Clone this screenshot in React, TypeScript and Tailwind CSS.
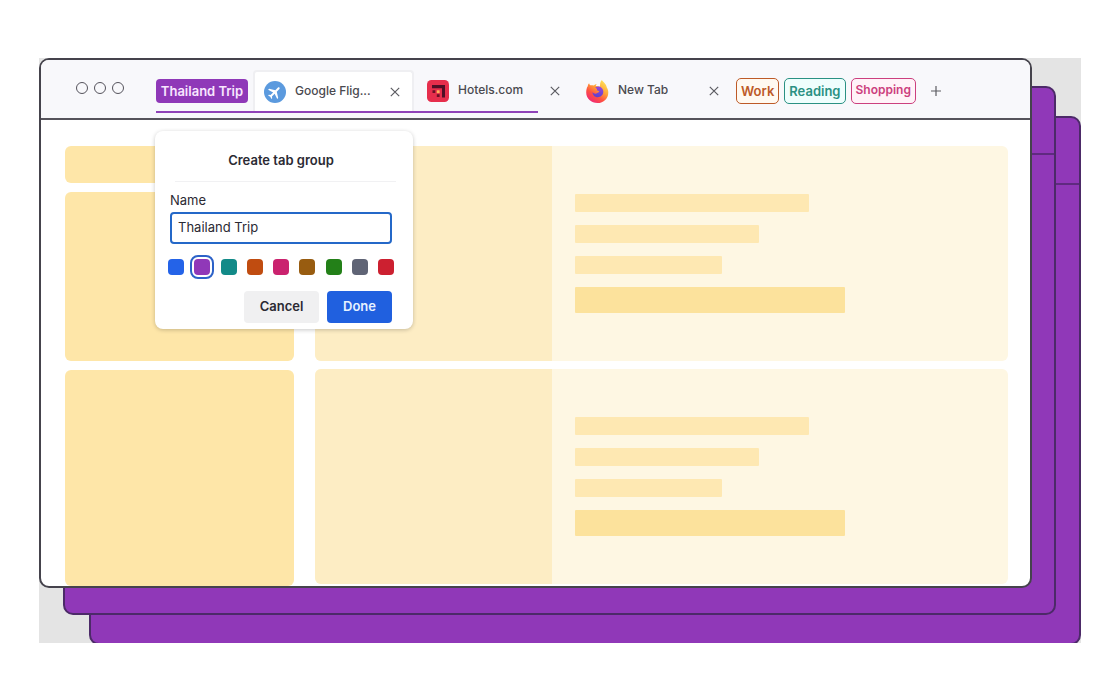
import { useState } from "react";

function CloseIcon() {
  return (
    <svg viewBox="0 0 10 10" className="size-[10px]" fill="none" stroke="#5c5c62" strokeWidth="1.2">
      <path d="M0.8 0.8 9.2 9.2M9.2 0.8 0.8 9.2" />
    </svg>
  );
}

function CloseButton({ label }: { label: string }) {
  return (
    <button type="button" aria-label={label} className="flex size-4 shrink-0 items-center justify-center">
      <CloseIcon />
    </button>
  );
}

function FlightsIcon() {
  return (
    <svg viewBox="0 0 22 22" className="size-[22px] shrink-0">
      <circle cx="11" cy="11" r="11" fill="#5b9ade" />
      <g transform="translate(10.6 11.4) rotate(45) scale(0.68) translate(-11.5 -12)">
        <path
          fill="#fff"
          d="M21 16v-2l-8-5V3.5c0-.83-.67-1.5-1.5-1.5S10 2.67 10 3.5V9l-8 5v2l8-2.5V19l-2 1.5V22l3.5-1 3.5 1v-1.5L13 19v-5.5l8 2.5z"
        />
      </g>
    </svg>
  );
}

function HotelsIcon() {
  return (
    <svg viewBox="0 0 22 22" className="size-[22px] shrink-0">
      <rect width="22" height="22" rx="4.5" fill="#e62e4c" />
      <path d="M5 5h13v12.500h-3V8.200H5z" fill="#4f0f26" />
      <path d="M5.500 10.300h2.800v2.800H5.500zM9.800 14.300h2.800v2.800H9.800z" fill="#6a1026" />
      <rect x="9.800" y="10.300" width="2.800" height="2.800" fill="#ffb25a" />
    </svg>
  );
}

function FirefoxIcon() {
  return (
    <svg viewBox="0 0 24 24" className="size-6 shrink-0">
      <defs>
        <linearGradient id="flame" x1="0.85" y1="0.05" x2="0.25" y2="0.95">
          <stop offset="0" stopColor="#ffe45a" />
          <stop offset="0.4" stopColor="#ffa436" />
          <stop offset="0.7" stopColor="#ff5240" />
          <stop offset="1" stopColor="#f02a74" />
        </linearGradient>
        <linearGradient id="globe" x1="0.6" y1="0" x2="0.4" y2="1">
          <stop offset="0" stopColor="#9a48d8" />
          <stop offset="1" stopColor="#5c40cc" />
        </linearGradient>
      </defs>
      <path
        fill="url(#flame)"
        d="M16.800 1c1.200 1.800 2.900 2.800 4 4.700.5.900.8 1.700.9 2.500 1 1.500 1.600 3.300 1.600 5.200C23.300 19.300 18.700 24 12.500 24S1.200 19.400 1.200 13.500c0-2.300.4-4.500 1.500-6.200.1-1.300.6-2.300 1.400-3 .2.900.6 1.500 1.200 2 1.300-.3 2.400-.2 3.500.2.800-.9 1.900-1.500 3-1.600-.7.700-1 1.500-1 2.200 1.700.1 3.100.3 4.200 1 .1-2.500-.3-5 1.800-7.100z"
      />
      <path fill="url(#globe)" d="M10.300 8.300c3.700-1.900 8 .3 8 4.500 0 3.100-2.400 5.400-5.500 5.400-3 0-5.300-2.200-5.300-5 1 1.200 2.400 1.800 3.900 1.300 1.200-.4 1.700-1.400 2.900-1.500-.4-1.200-1.500-1.700-2.700-1.400.8-1 .6-1.800-.2-2.200-.5-.2-.8-.5-1.100-1.100z" />
    </svg>
  );
}

function TabTitle({ children }: { children: string }) {
  return (
    <button type="button" className="truncate pb-[2px] text-left text-[12px] leading-4 font-medium text-[#4a494f]">
      {children}
    </button>
  );
}

function TabBar() {
  return (
    <header className="flex h-[60px] items-end border-b-2 border-[#55535b] bg-[#f8f8fb] pb-[5px] pl-[35px]">
      <div className="mb-[19px] flex gap-[6px]">
        <span className="size-3 rounded-full border border-[#55535c]" />
        <span className="size-3 rounded-full border border-[#55535c]" />
        <span className="size-3 rounded-full border border-[#55535c]" />
      </div>
      <div className="ml-8 flex w-[382px] shrink-0 items-center border-b-2 border-[#8f42b8]">
        <button
          type="button"
          className="h-6 w-[92px] shrink-0 rounded-sm bg-[#8f38b8] text-[13px] leading-6 font-semibold whitespace-nowrap text-[#f8e6ff]"
        >
          Thailand Trip
        </button>
        <div className="ml-[5px] flex h-[41px] w-[161px] shrink-0 items-center rounded-t border-2 border-b-0 border-[#efeff2] bg-white px-[9px]">
          <FlightsIcon />
          <span className="ml-[9px] flex flex-1">
            <TabTitle>Google Flig...</TabTitle>
          </span>
          <CloseButton label="Close Google Flights" />
        </div>
        <div className="ml-[13px] flex items-center gap-[9px]">
          <HotelsIcon />
          <TabTitle>Hotels.com</TabTitle>
        </div>
      </div>
      <div className="ml-[9px] flex h-[43px] flex-1 items-center pb-[2px]">
        <CloseButton label="Close Hotels.com" />
        <div className="ml-[22px] flex w-[137px] items-center">
          <FirefoxIcon />
          <span className="ml-[9px] flex flex-1">
            <TabTitle>New Tab</TabTitle>
          </span>
          <CloseButton label="Close New Tab" />
        </div>
        <div className="ml-[14px] flex items-center gap-[5px] text-[13px] font-semibold">
          <button type="button" className="h-[26px] rounded-[5px] border border-[#bd5a27] bg-[#fff9f1] px-1 leading-6 text-[#bd5a27]">
            Work
          </button>
          <button type="button" className="h-[26px] rounded-[5px] border border-[#2a9183] bg-[#effefd] px-1 leading-6 text-[#2a9183]">
            Reading
          </button>
          <button type="button" className="h-[26px] rounded-[5px] border border-[#cc3f7e] bg-[#fff3f8] px-1 pb-[2px] text-[12px] leading-[22px] text-[#cc3f7e]">
            Shopping
          </button>
        </div>
        <button type="button" aria-label="New tab" className="ml-[14px] flex size-3 items-center justify-center">
          <svg viewBox="0 0 10 10" className="size-[10px]" fill="none" stroke="#5c5c62" strokeWidth="1.2">
            <path d="M5 0v10M0 5h10" />
          </svg>
        </button>
      </div>
    </header>
  );
}

const colors = [
  { name: "Blue", fill: "bg-[#2463e8]" },
  { name: "Purple", fill: "bg-[#9038b8]" },
  { name: "Teal", fill: "bg-[#128a88]" },
  { name: "Orange", fill: "bg-[#c04c10]" },
  { name: "Pink", fill: "bg-[#ca226e]" },
  { name: "Brown", fill: "bg-[#985c10]" },
  { name: "Green", fill: "bg-[#238018]" },
  { name: "Gray", fill: "bg-[#5f6475]" },
  { name: "Red", fill: "bg-[#cc2030]" },
];

function GroupDialog() {
  const [name, setName] = useState("Thailand Trip");
  const [color, setColor] = useState("Purple");
  return (
    <form
      aria-label="Create tab group"
      onSubmit={(event) => event.preventDefault()}
      className="absolute top-[11px] left-[114px] w-[258px] rounded-lg bg-white pt-5 pr-[21px] pb-[6px] pl-[15px] text-[13px] text-[#2b2a33] shadow-[0_1px_4px_rgba(0,0,0,0.22)]"
    >
      <h2 className="pb-3 text-center leading-[18px] font-semibold">Create tab group</h2>
      <hr className="-mr-1 ml-[5px] border-[#f1f1f3]" />
      <label htmlFor="group-name" className="mt-2 block leading-5">
        Name
      </label>
      <input
        id="group-name"
        value={name}
        onChange={(event) => setName(event.target.value)}
        className="mt-[2px] block h-8 w-full rounded border-2 border-[#2468c8] bg-white px-[6px] pb-[2px] outline-none"
      />
      <fieldset aria-label="Color" className="-mx-[2px] mt-[15px] flex justify-between">
        {colors.map((item) => (
          <input
            key={item.name}
            type="radio"
            name="group-color"
            aria-label={item.name}
            checked={color === item.name}
            onChange={() => setColor(item.name)}
            className={`size-4 appearance-none rounded outline-offset-2 outline-[#2c62c8] checked:outline-2 ${item.fill}`}
          />
        ))}
      </fieldset>
      <div className="mt-4 flex justify-end gap-2 font-semibold">
        <button type="button" className="h-8 w-[75px] rounded bg-[#f0f0f1]">
          Cancel
        </button>
        <button type="submit" className="h-8 w-[65px] rounded bg-[#2060df] text-[#e6f2ff]">
          Done
        </button>
      </div>
    </form>
  );
}

function ResultCard() {
  return (
    <div className="flex h-[215px] overflow-hidden rounded-md bg-[#fef7e3]">
      <div className="w-[237px] shrink-0 bg-[#fdedc4]" />
      <div className="flex flex-1 flex-col gap-[13px] pt-12 pl-[23px]">
        <div className="h-[18px] w-[234px] rounded-[1px] bg-[#fee8b2]" />
        <div className="h-[18px] w-[184px] rounded-[1px] bg-[#fee8b2]" />
        <div className="h-[18px] w-[147px] rounded-[1px] bg-[#fee8b2]" />
        <div className="h-[26px] w-[270px] rounded-[1px] bg-[#fce29c]" />
      </div>
    </div>
  );
}

function PageContent() {
  return (
    <div className="relative flex gap-[21px] pt-[26px] pr-[22px] pl-6">
      <div className="flex w-[229px] shrink-0 flex-col gap-[9px]">
        <div className="h-[37px] rounded-md bg-[#fee6a8]" />
        <div className="h-[169px] rounded-md bg-[#fee6a8]" />
        <div className="h-[216px] rounded-md bg-[#fee6a8]" />
      </div>
      <div className="flex flex-1 flex-col gap-2">
        <ResultCard />
        <ResultCard />
      </div>
      <GroupDialog />
    </div>
  );
}

function BackWindow({ place }: { place: string }) {
  return (
    <div aria-hidden="true" className={`absolute rounded-[10px] border-2 border-[#4c2a68] bg-[#9038b8] ${place}`}>
      <div className="h-[67px] border-b-2 border-[#5f2a80]" />
    </div>
  );
}

export default function App() {
  return (
    <main className="bg-white px-[39px] py-[58px] font-['Inter',sans-serif]">
      <div className="relative overflow-hidden bg-[#e4e4e4] pr-[49px] pb-[55px]">
        <BackWindow place="top-[58px] right-0 -bottom-[2px] left-[50px]" />
        <BackWindow place="top-[28px] right-[25px] bottom-[28px] left-[24px]" />
        <div className="relative overflow-hidden rounded-[10px] border-2 border-[#45434c] bg-white">
          <TabBar />
          <PageContent />
        </div>
      </div>
    </main>
  );
}
